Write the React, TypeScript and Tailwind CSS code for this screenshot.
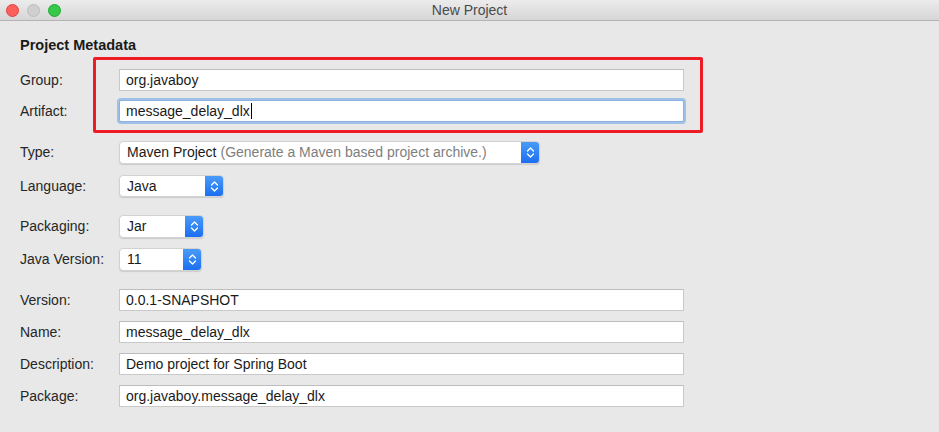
import React from "react";

const font = { fontFamily: '"Liberation Sans", Arial, sans-serif' };

function TextField({ value, focused }: { value: string; focused?: boolean }) {
  return (
    <div
      className={
        "h-full w-[565px] bg-white flex items-center pl-[6px] text-[14px] text-[#1a1a1a] border " +
        (focused
          ? "border-[#8eb1de] shadow-[0_0_0_2px_#9fc0e8] rounded-[2px]"
          : "border-[#c9c9c9] border-t-[#bdbdbd]")
      }
    >
      <span>{value}</span>
      {focused && <span className="w-px h-[16px] bg-black ml-px" />}
    </div>
  );
}

function Chevrons() {
  return (
    <svg width="9" height="13" viewBox="0 0 9 13" fill="none">
      <path d="M1.5 5 L4.5 2 L7.5 5" stroke="white" strokeWidth="1.3" strokeLinecap="round" strokeLinejoin="round" />
      <path d="M1.5 8 L4.5 11 L7.5 8" stroke="white" strokeWidth="1.3" strokeLinecap="round" strokeLinejoin="round" />
    </svg>
  );
}

function Select({ width, children }: { width: string; children: React.ReactNode }) {
  return (
    <div
      className={
        width +
        " h-full bg-white rounded-[4px] flex items-stretch border border-[#d2d2d2] shadow-[0_1px_1px_rgba(0,0,0,0.12)] overflow-hidden"
      }
    >
      <div className="flex-1 flex items-center pl-[7px] text-[14px] text-[#1a1a1a] whitespace-nowrap overflow-hidden">
        {children}
      </div>
      <div className="w-[18px] bg-gradient-to-b from-[#4a9bf8] to-[#1b6ef0] flex items-center justify-center">
        <Chevrons />
      </div>
    </div>
  );
}

function Row({
  label,
  mt,
  h,
  children,
}: {
  label: string;
  mt: string;
  h: string;
  children: React.ReactNode;
}) {
  return (
    <div className={"flex items-center " + mt + " " + h}>
      <div className="w-[99px] text-[14px] text-[#262626]">{label}</div>
      {children}
    </div>
  );
}

export default function App() {
  return (
    <div className="w-[939px] h-[432px] bg-[#e8e8e8] relative overflow-hidden" style={font}>
      {/* title bar */}
      <div className="h-[21px] bg-gradient-to-b from-[#ececec] to-[#d6d6d6] border-b border-[#b4b4b4] flex items-center relative">
        <div className="flex items-center gap-[8px] pl-[6px]">
          <span className="w-[13px] h-[13px] rounded-full bg-[#fc605c] border border-[#e1443f]" />
          <span className="w-[13px] h-[13px] rounded-full bg-[#cfcfcf] border border-[#bcbcbc]" />
          <span className="w-[13px] h-[13px] rounded-full bg-[#35c94a] border border-[#22a833]" />
        </div>
        <div className="absolute inset-0 flex items-center justify-center text-[14px] text-[#4a4a4a]">
          New Project
        </div>
      </div>

      <div className="pl-[20px]">
        <div className="mt-[15px] h-[20px] flex items-center text-[14.5px] font-bold text-[#1a1a1a]">
          Project Metadata
        </div>

        <Row label="Group:" mt="mt-[13px]" h="h-[22px]">
          <TextField value="org.javaboy" />
        </Row>
        <Row label="Artifact:" mt="mt-[9px]" h="h-[22px]">
          <TextField value="message_delay_dlx" focused />
        </Row>

        <Row label="Type:" mt="mt-[19px]" h="h-[23px]">
          <Select width="w-[421px]">
            <span>Maven Project</span>
            <span className="text-[#7e7e7e] ml-[4px]">(Generate a Maven based project archive.)</span>
          </Select>
        </Row>
        <Row label="Language:" mt="mt-[11px]" h="h-[22px]">
          <Select width="w-[105px]">Java</Select>
        </Row>
        <Row label="Packaging:" mt="mt-[18px]" h="h-[23px]">
          <Select width="w-[85px]">Jar</Select>
        </Row>
        <Row label="Java Version:" mt="mt-[10px]" h="h-[23px]">
          <Select width="w-[83px]">11</Select>
        </Row>

        <Row label="Version:" mt="mt-[18px]" h="h-[22px]">
          <TextField value="0.0.1-SNAPSHOT" />
        </Row>
        <Row label="Name:" mt="mt-[10px]" h="h-[22px]">
          <TextField value="message_delay_dlx" />
        </Row>
        <Row label="Description:" mt="mt-[10px]" h="h-[22px]">
          <TextField value="Demo project for Spring Boot" />
        </Row>
        <Row label="Package:" mt="mt-[10px]" h="h-[22px]">
          <TextField value="org.javaboy.message_delay_dlx" />
        </Row>
      </div>

      {/* red annotation box */}
      <div className="absolute left-[93px] top-[57px] w-[610px] h-[76px] border-[3px] border-[#ee1c25] rounded-[2px] pointer-events-none" />
    </div>
  );
}
